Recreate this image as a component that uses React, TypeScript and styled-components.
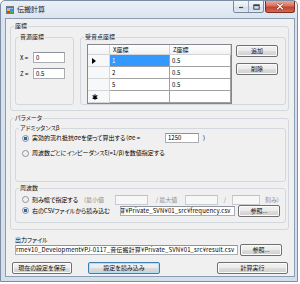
import React from 'react'
import styled, {createGlobalStyle} from 'styled-components'

const GlobalStyle = createGlobalStyle`
    html, body {
        margin: 0;
        padding: 0;
        background: #ffffff;
    }
    body {
        font-family: "Noto Sans CJK JP", "Liberation Sans", sans-serif;
    }
`

const Window = styled.div`
    width: 298px;
    height: 282px;
    box-sizing: border-box;
    border: 1px solid #7d8ea4;
    border-radius: 5px 5px 0 0;
    background: linear-gradient(#eaf0f7, #d9e3ef 20px, #d4dfec);
    display: flex;
    flex-direction: column;
    font-family: "Noto Sans CJK JP", "Liberation Sans", sans-serif;
    font-feature-settings: "palt";
    color: #000;
`
const TitleBar = styled.div`
    height: 17px;
    flex-shrink: 0;
    display: flex;
    align-items: flex-start;
    padding-left: 5px;
`
const AppIcon = styled.svg`
    margin-top: 5px;
    flex-shrink: 0;
`
const Title = styled.span`
    font-size: 7px;
    line-height: 8px;
    margin: 4px 0 0 3px;
    color: #1a1a1a;
`
const Captions = styled.div`
    margin-left: auto;
    margin-right: 2px;
    display: flex;
    gap: 1px;
`
const CaptionPair = styled.div`
    display: flex;
    border: 1px solid #76869b;
    border-top: none;
    border-radius: 0 0 3px 3px;
    overflow: hidden;
`
const CaptionButton = styled.div<{$last?: boolean}>`
    width: 14px;
    height: 11px;
    display: flex;
    align-items: center;
    justify-content: center;
    background: linear-gradient(#f4f7fb, #e3eaf3 50%, #d3dde9 51%, #dfe7f1);
    border-left: ${p => p.$last ? '1px solid #9aa8ba' : 'none'};
`
const CloseButton = styled.div`
    width: 28px;
    height: 11px;
    box-sizing: content-box;
    display: flex;
    align-items: center;
    justify-content: center;
    border: 1px solid #7b2f25;
    border-top: none;
    border-radius: 0 0 3px 3px;
    background: linear-gradient(#e9a99b, #d7705f 45%, #c5402d 55%, #d26a52);
`

const Client = styled.div`
    flex: 1;
    margin: 0 2px 4px 4px;
    border: 1px solid #8c9db3;
    background: #f0f0f0;
    padding: 3px 5px 0 4px;
    display: flex;
    flex-direction: column;
    font-size: 6px;
    line-height: 8px;
`

const Group = styled.fieldset<{$w: number; $h: number}>`
    box-sizing: border-box;
    width: ${p => p.$w}px;
    height: ${p => p.$h}px;
    min-width: 0;
    margin: 0;
    padding: 0;
    border: 1px solid #d2d8de;
    border-radius: 3px;
    flex-shrink: 0;
`
const Legend = styled.legend`
    margin-left: 3px;
    padding: 0 1px;
    font-size: 6px;
    line-height: 8px;
    color: #151515;
`
const GroupBody = styled.div<{$dir?: 'row' | 'column'; $pt: number; $pl: number; $gap?: number}>`
    display: flex;
    flex-direction: ${p => p.$dir || 'row'};
    padding: ${p => p.$pt}px 0 0 ${p => p.$pl}px;
    gap: ${p => p.$gap || 0}px;
`

const CoordRow = styled.div`
    display: flex;
    align-items: center;
    height: 11px;
`
const CoordLabel = styled.span`
    width: 13px;
    flex-shrink: 0;
    white-space: nowrap;
`

const TextBox = styled.div<{$w: number; $h?: number; $disabled?: boolean; $path?: boolean}>`
    box-sizing: border-box;
    width: ${p => p.$w}px;
    height: ${p => p.$h || 10}px;
    flex-shrink: 0;
    border: 1px solid ${p => p.$disabled ? '#c9cbcf' : '#abadb3'};
    border-top-color: ${p => p.$disabled ? '#bfc1c5' : '#8f939b'};
    background: ${p => p.$disabled ? '#f7f7f7' : '#ffffff'};
    padding: 0 ${p => p.$path ? 0 : 2}px;
    display: flex;
    align-items: center;
    overflow: hidden;
    white-space: nowrap;
    font-size: 6px;
    line-height: 8px;
    letter-spacing: ${p => p.$path ? '0.14px' : 'normal'};
`
const PathText = styled.span<{$indent: number}>`
    flex-shrink: 0;
    margin-left: ${p => p.$indent}px;
`

const Button = styled.button<{$w: number; $focus?: boolean}>`
    box-sizing: border-box;
    width: ${p => p.$w}px;
    height: 12px;
    flex-shrink: 0;
    padding: 0;
    margin: 0;
    font-family: inherit;
    font-feature-settings: "palt";
    font-size: 6px;
    line-height: 10px;
    color: #111;
    border: 1px solid ${p => p.$focus ? '#3c7fb1' : '#707070'};
    border-radius: 2px;
    background: linear-gradient(#f3f3f3 0%, #ebebeb 48%, #dddddd 52%, #cfcfcf 100%);
    box-shadow: inset 0 0 0 1px ${p => p.$focus ? '#b6dcf3' : '#fbfbfb'};
`

const Grid = styled.div`
    box-sizing: border-box;
    width: 145px;
    height: 60px;
    flex-shrink: 0;
    border: 1px solid #828790;
    background: #ababab;
    display: grid;
    grid-template-columns: 22px 60px 61px;
    grid-template-rows: 10px repeat(4, 12px);
`
const HeadCell = styled.div`
    box-sizing: border-box;
    border-right: 1px solid #d5d5d5;
    border-bottom: 1px solid #d5d5d5;
    background: linear-gradient(#ffffff, #f1f2f4);
    padding-left: 3px;
    display: flex;
    align-items: center;
    white-space: nowrap;
`
const RowHead = styled.div`
    box-sizing: border-box;
    border-right: 1px solid #d5d5d5;
    border-bottom: 1px solid #d5d5d5;
    background: #f7f8fa;
    display: flex;
    align-items: center;
    padding-left: 4px;
`
const Cell = styled.div<{$selected?: boolean}>`
    box-sizing: border-box;
    border-right: 1px solid #a0a0a0;
    border-bottom: 1px solid #a0a0a0;
    background: ${p => p.$selected ? '#3399ff' : '#ffffff'};
    color: ${p => p.$selected ? '#ffffff' : '#000000'};
    padding-left: 2px;
    display: flex;
    align-items: center;
`

const SideButtons = styled.div`
    display: flex;
    flex-direction: column;
    gap: 6px;
    margin-left: 4px;
    padding-top: 1px;
`

const OptionRow = styled.div<{$h: number}>`
    display: flex;
    align-items: center;
    height: ${p => p.$h}px;
    white-space: nowrap;
`
const Radio = styled.span<{$checked?: boolean}>`
    box-sizing: border-box;
    width: 7px;
    height: 7px;
    flex-shrink: 0;
    margin-right: 3px;
    border-radius: 50%;
    border: 1px solid #8b8f96;
    background: ${p => p.$checked
        ? 'radial-gradient(circle, #2f7fd6 0, #1c5ea8 1.4px, #dfe8f2 1.9px, #f6f8fa 3px)'
        : 'radial-gradient(circle, #e9ecef 0, #f7f8f9 3px)'};
`
const OptionText = styled.span<{$w?: number; $dim?: boolean; $center?: boolean; $ml?: number}>`
    ${p => p.$w ? `width: ${p.$w}px;` : ''}
    flex-shrink: 0;
    margin-left: ${p => p.$ml || 0}px;
    color: ${p => p.$dim ? '#8d8d8d' : '#000'};
    text-align: ${p => p.$center ? 'center' : 'left'};
`

const FieldLabel = styled.div`
    margin: 6px 0 0 5px;
    height: 8px;
`
const FieldRow = styled.div<{$mt: number; $pl: number}>`
    display: flex;
    align-items: center;
    height: 12px;
    margin-top: ${p => p.$mt}px;
    padding-left: ${p => p.$pl}px;
`
const Spacer = styled.div`
    flex: 1;
`
const Gap = styled.div<{$h: number}>`
    height: ${p => p.$h}px;
    flex-shrink: 0;
`

const receivers = [
    {x: '1', z: '0.5'},
    {x: '2', z: '0.5'},
    {x: '5', z: '0.5'},
]

const CurrentRowMark = () => (
    <svg width="4" height="6" viewBox="0 0 4 6">
        <path d="M0 0 L4 3 L0 6 Z" fill="#000"/>
    </svg>
)

const NewRowMark = () => (
    <svg width="6" height="6" viewBox="0 0 6 6">
        <path d="M3 0.3 V5.7 M0.6 1.6 L5.4 4.4 M0.6 4.4 L5.4 1.6" stroke="#000" strokeWidth="1.1"/>
    </svg>
)

export default function App() {
    return (
        <>
            <GlobalStyle/>
            <Window>
                <TitleBar>
                    <AppIcon width="8" height="8" viewBox="0 0 8 8">
                        <rect x="0.5" y="0.5" width="7" height="7" fill="#ffffff" stroke="#6f7c8c"/>
                        <rect x="1" y="1" width="6" height="1.5" fill="#3a78c8"/>
                        <rect x="1" y="3" width="3" height="2" fill="#f2c200"/>
                        <rect x="4" y="3" width="3" height="2" fill="#3f8ee0"/>
                        <rect x="1" y="5" width="3" height="2" fill="#d93a2b"/>
                        <rect x="4" y="5" width="3" height="2" fill="#5aa83c"/>
                    </AppIcon>
                    <Title>伝搬計算</Title>
                    <Captions>
                        <CaptionPair>
                            <CaptionButton>
                                <svg width="6" height="5" viewBox="0 0 6 5">
                                    <rect x="0.5" y="2.5" width="5" height="2" fill="#3a4656" stroke="#ffffff" strokeWidth="0.6"/>
                                </svg>
                            </CaptionButton>
                            <CaptionButton $last>
                                <svg width="7" height="6" viewBox="0 0 7 6">
                                    <rect x="0.8" y="0.8" width="5.4" height="4.4" fill="none" stroke="#3a4656" strokeWidth="1"/>
                                    <rect x="0.8" y="0.8" width="5.4" height="1.4" fill="#3a4656"/>
                                </svg>
                            </CaptionButton>
                        </CaptionPair>
                        <CloseButton>
                            <svg width="8" height="7" viewBox="0 0 8 7">
                                <path d="M1.2 0.8 L6.8 6.2 M6.8 0.8 L1.2 6.2" stroke="#6a2219" strokeWidth="2.2"/>
                                <path d="M1.2 0.8 L6.8 6.2 M6.8 0.8 L1.2 6.2" stroke="#ffffff" strokeWidth="1.3"/>
                            </svg>
                        </CloseButton>
                    </Captions>
                </TitleBar>

                <Client>
                    <Group $w={279} $h={89}>
                        <Legend>座標</Legend>
                        <GroupBody $pt={3} $pl={4} $gap={6}>
                            <Group $w={59} $h={72}>
                                <Legend>音源座標</Legend>
                                <GroupBody $dir="column" $pt={11} $pl={4} $gap={5}>
                                    <CoordRow>
                                        <CoordLabel>X =</CoordLabel>
                                        <TextBox $w={32} $h={11}>0</TextBox>
                                    </CoordRow>
                                    <CoordRow>
                                        <CoordLabel>Z =</CoordLabel>
                                        <TextBox $w={32} $h={11}>0.5</TextBox>
                                    </CoordRow>
                                </GroupBody>
                            </Group>
                            <Group $w={206} $h={72}>
                                <Legend>受音点座標</Legend>
                                <GroupBody $pt={3} $pl={6}>
                                    <Grid>
                                        <HeadCell/>
                                        <HeadCell>X座標</HeadCell>
                                        <HeadCell>Z座標</HeadCell>
                                        {receivers.map((r, i) => (
                                            <React.Fragment key={i}>
                                                <RowHead>{i === 0 && <CurrentRowMark/>}</RowHead>
                                                <Cell $selected={i === 0}>{r.x}</Cell>
                                                <Cell>{r.z}</Cell>
                                            </React.Fragment>
                                        ))}
                                        <RowHead><NewRowMark/></RowHead>
                                        <Cell/>
                                        <Cell/>
                                    </Grid>
                                    <SideButtons>
                                        <Button $w={42}>追加</Button>
                                        <Button $w={42}>削除</Button>
                                    </SideButtons>
                                </GroupBody>
                            </Group>
                        </GroupBody>
                    </Group>

                    <Gap $h={3}/>

                    <Group $w={279} $h={116}>
                        <Legend>パラメータ</Legend>
                        <GroupBody $dir="column" $pt={2} $pl={4} $gap={2}>
                            <Group $w={271} $h={58}>
                                <Legend>アドミッタンスβ</Legend>
                                <GroupBody $dir="column" $pt={1} $pl={6} $gap={5}>
                                    <OptionRow $h={10}>
                                        <Radio $checked/>
                                        <OptionText $w={133}>実効的流れ抵抗σeを使って算出する（σe =</OptionText>
                                        <TextBox $w={34}>1250</TextBox>
                                        <OptionText $ml={4}>)</OptionText>
                                    </OptionRow>
                                    <OptionRow $h={10}>
                                        <Radio/>
                                        <OptionText>周波数ごとにインピーダンスξ(=1/β)を数値指定する</OptionText>
                                    </OptionRow>
                                </GroupBody>
                            </Group>
                            <Group $w={271} $h={39}>
                                <Legend>周波数</Legend>
                                <GroupBody $dir="column" $pt={2} $pl={6}>
                                    <OptionRow $h={11}>
                                        <Radio/>
                                        <OptionText $w={52}>刻み幅で指定する</OptionText>
                                        <OptionText $w={31} $dim>(最小値</OptionText>
                                        <TextBox $w={33} $disabled/>
                                        <OptionText $w={37} $dim $center>/ 最大値</OptionText>
                                        <TextBox $w={33} $disabled/>
                                        <OptionText $w={14} $dim $center>/</OptionText>
                                        <TextBox $w={28} $disabled/>
                                        <OptionText $dim $ml={5}>刻み)</OptionText>
                                    </OptionRow>
                                    <OptionRow $h={11}>
                                        <Radio $checked/>
                                        <OptionText $w={88}>右のCSVファイルから読み込む</OptionText>
                                        <TextBox $w={115} $path>
                                            <PathText $indent={-2}>算¥Private_SVN¥01_src¥frequency.csv</PathText>
                                        </TextBox>
                                        <Button $w={42} style={{marginLeft: 3}}>参照...</Button>
                                    </OptionRow>
                                </GroupBody>
                            </Group>
                        </GroupBody>
                    </Group>

                    <FieldLabel>出力ファイル</FieldLabel>
                    <FieldRow $mt={0} $pl={5}>
                        <TextBox $w={223} $path>
                            <PathText $indent={0}>rme¥10_Development¥PJ-0117_音伝搬計算¥Private_SVN¥01_src¥result.csv</PathText>
                        </TextBox>
                        <Button $w={42} style={{marginLeft: 2}}>参照...</Button>
                    </FieldRow>
                    <FieldRow $mt={6} $pl={2}>
                        <Button $w={60}>現在の設定を保存</Button>
                        <Button $w={72} $focus style={{marginLeft: 16}}>設定を読み込み</Button>
                        <Spacer/>
                        <Button $w={71} style={{marginRight: 1}}>計算実行</Button>
                    </FieldRow>
                </Client>
            </Window>
        </>
    )
}
